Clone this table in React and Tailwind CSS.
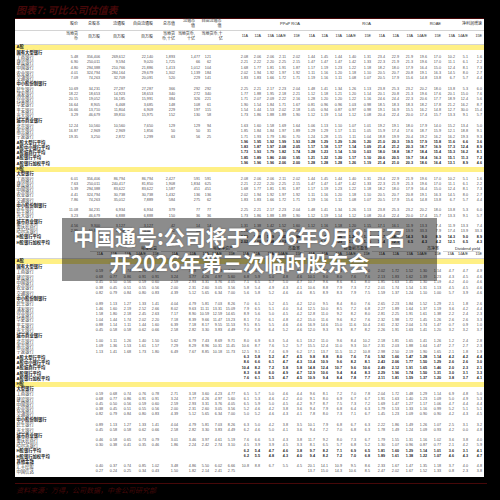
const S1 = 'grid grid-cols-[53px_10px_22px_25px_28px_22px_25px_11px_37px_13px_13px_12px_14px_15px_13px_14px_14px_15px_14px_14px_14px_14px_14px_14px_13px_14px]'
const S2 = 'grid grid-cols-[73px_15px_14px_14px_15px_13px_19px_18px_13px_13px_13px_14px_11px_14px_14px_14px_13px_13px_14px_14px_14px_15px_14px_14px_14px_14px_13px_14px_14px]'

const g = (label) => ({ kind: 'g', label, values: [] })
const r = (label, v) => ({ kind: 'r', label, values: v.split(' ').map((x) => (x === '_' ? '' : x)) })
const a = (label, v) => ({ kind: 'a', label, values: v.split(' ').map((x) => (x === '_' ? '' : x)) })

const RA = {
  icbc: '2.08 2.06 2.06 2.11 2.02 1.44 1.45 1.44 1.40 1.31 23.4 22.9 21.9 19.6 17.0 10.2 5.1 1.6',
  ccb: '2.21 2.22 2.20 2.25 2.15 1.47 1.47 1.47 1.42 1.33 22.3 21.9 21.3 19.6 17.0 11.1 6.1 2.2',
  boc: '1.68 1.77 1.81 1.91 1.87 1.17 1.19 1.23 1.22 1.18 18.2 18.0 17.9 16.4 15.0 12.4 8.1 7.3',
  abc: '2.02 1.94 1.92 1.97 1.92 1.11 1.16 1.20 1.18 1.10 20.5 20.7 20.8 19.1 16.3 14.5 8.0 2.7',
  bocom: '1.83 1.83 1.66 1.72 1.71 1.19 1.16 1.11 1.08 1.07 20.5 17.9 15.6 14.8 13.8 6.7 5.7 4.4',
  cmbc: '2.25 2.21 2.17 2.23 2.04 1.48 1.41 1.34 1.26 1.13 23.8 25.3 23.2 20.2 18.0 13.8 5.3 6.0',
  ceb: '1.73 1.86 1.88 1.89 1.90 1.12 1.19 1.14 1.12 1.08 20.4 22.4 20.0 17.4 15.7 13.3 9.1 5.7',
}

const s1A = [
  g('国有大型银行'),
  r('工商银行', '5.48 356,406 269,612 22,140 1,893 1,477 121 ' + RA.icbc),
  r('建设银行', '6.90 250,011 9,594 9,020 1,725 66 62 ' + RA.ccb),
  r('中国银行', '4.80 294,388 210,766 21,886 1,413 1,012 104 ' + RA.boc),
  r('农业银行', '4.01 324,794 284,164 29,679 1,302 1,139 184 ' + RA.abc),
  r('交通银行', '7.09 74,263 32,709 20,091 520 229 141 ' + RA.bocom),
  g('中小股份制银行'),
  r('民生银行', '10.69 34,231 27,287 27,287 366 292 292 ' + RA.cmbc),
  r('浦发银行', '18.22 18,653 14,923 18,653 340 272 340 1.77 1.88 1.95 2.18 2.21 1.12 1.18 1.21 1.20 1.14 20.1 20.8 21.3 19.6 17.6 20.1 15.0 7.6'),
  r('兴业银行', '20.15 19,052 16,185 15,991 384 326 221 1.71 2.07 2.09 2.22 2.16 1.28 1.20 1.20 1.22 1.16 24.6 24.4 22.3 20.6 17.7 18.9 12.4 5.6'),
  r('华夏银行', '16.64 8,905 6,468 3,685 148 108 61 1.90 1.54 1.84 1.71 1.67 0.81 0.96 0.96 1.03 0.98 18.5 18.3 18.3 18.2 17.8 21.2 16.2 8.7'),
  r('平安银行', '16.66 13,710 11,804 6,909 229 197 115 1.54 1.44 1.53 2.02 2.18 1.05 0.94 0.87 0.97 0.98 19.1 16.9 15.5 16.2 14.8 12.7 30.0 15.4'),
  r('光大银行', '3.29 46,679 39,810 15,975 152 130 58 ' + RA.ceb),
  g('城市商业银行'),
  r('北京银行', '12.24 10,560 10,560 7,650 129 129 94 1.63 1.60 1.58 1.69 1.64 1.06 1.13 1.10 1.07 1.01 19.2 19.1 18.0 17.9 14.0 15.2 13.4 5.0'),
  r('南京银行', '16.87 2,969 2,969 1,856 50 50 31 1.85 1.84 1.84 1.97 1.89 1.29 1.29 1.17 1.11 1.05 15.9 17.4 17.6 18.7 15.9 12.1 18.8 9.1'),
  r('宁波银行', '19.35 3,250 2,872 1,299 63 56 25 1.71 1.93 1.79 1.80 1.70 1.24 1.28 1.15 1.11 1.04 18.8 19.9 20.4 19.2 16.2 16.2 19.3 9.3'),
  a('A股大型行平均', '_ _ _ _ _ _ _ 1.96 1.95 1.92 1.99 1.93 1.28 1.29 1.29 1.26 1.20 21.0 20.3 19.5 17.9 15.8 11.6 6.6 3.6'),
  a('A股中小银行平均', '_ _ _ _ _ _ _ 1.83 1.87 1.97 2.08 2.05 1.17 1.18 1.17 1.14 1.09 21.4 21.2 20.3 18.7 16.9 17.3 12.4 8.9'),
  a('A股城商行平均', '_ _ _ _ _ _ _ 1.73 1.93 1.79 1.82 1.74 1.28 1.23 1.14 1.10 1.03 18.0 18.8 18.7 18.4 15.4 15.3 16.2 8.1'),
  a('A股银行平均', '_ _ _ _ _ _ _ 1.85 1.89 1.86 2.00 1.95 1.21 1.22 1.20 1.17 1.10 20.6 20.5 19.7 18.4 16.3 15.1 11.3 7.2'),
  a('A股银行加权平均', '_ _ _ _ _ _ _ 1.96 1.96 1.96 2.06 2.00 1.28 1.28 1.28 1.26 1.19 21.4 21.0 20.3 18.6 16.4 13.1 8.9 4.6'),
]

const s1H = [
  g('大型银行'),
  r('工商银行', '6.01 356,406 86,794 86,794 2,427 591 591 ' + RA.icbc),
  r('建设银行', '7.63 250,011 240,417 81,850 1,908 1,834 625 ' + RA.ccb),
  r('中国银行', '5.39 294,388 83,622 83,622 1,587 451 451 ' + RA.boc),
  r('农业银行', '4.41 324,794 30,738 30,738 1,432 136 136 ' + RA.abc),
  r('交通银行', '7.86 74,263 35,012 7,889 584 275 62 ' + RA.bocom),
  g('中小股份制银行'),
  r('民生银行', '11.08 34,231 6,934 6,934 379 77 77 ' + RA.cmbc),
  r('光大银行', '3.23 46,679 6,888 6,888 150 36 36 ' + RA.ceb),
  g('城市商业银行'),
  r('重庆农商行', '4.56 9,300 3,127 3,127 42 14 14 1.31 1.38 1.42 1.52 1.60 1.12 1.16 1.18 1.20 1.15 17.1 16.1 11.9 13.3 7.4 11.9 13.3 7.4'),
  r('哈尔滨银行', '2.95 10,995 3,300 3,300 32 10 10 1.26 1.30 1.35 1.41 1.45 1.05 1.09 1.10 1.12 1.08 15.2 17.4 13.9 33.3 7.9 17.4 13.9 33.3'),
  a('H股银行平均', '_ _ _ _ _ _ _ 2.00 1.98 1.99 2.05 1.98 1.25 1.27 1.26 1.24 1.18 17.7 18.4 14.3 9.0 8.9 14.3 9.0 8.9'),
  a('H股银行加权平均', '_ _ _ _ _ _ _ 2.02 2.00 1.98 2.03 1.98 1.27 1.28 1.29 1.27 1.20 16.4 12.1 6.5 4.3 4.2 12.1 6.5 4.3'),
]

const V = {
  icbc: '0.59 0.68 0.74 0.76 0.78 2.71 3.18 3.60 4.23 4.77',
  ccb: '0.68 0.77 0.86 0.91 0.91 3.24 3.77 4.26 4.97 5.60',
  boc: '0.45 0.50 0.56 0.59 0.60 2.59 2.93 3.31 3.76 4.05',
  abc: '0.38 0.45 0.51 0.55 0.56 2.00 2.31 2.60 3.05 3.56',
  bocom: '0.82 0.79 0.84 0.80 0.83 4.39 5.12 5.65 6.34 7.00',
  cmbc: '0.89 1.13 1.27 1.33 1.41 4.04 4.79 5.81 7.03 8.26',
  ceb: '0.45 0.58 0.58 0.62 0.66 2.58 2.82 3.30 3.83 4.49',
}
const B10 = '_ _ _ _ _ _ _ _ _ _'

const s2A = [
  g('国有大型银行'),
  r('工商银行', V.icbc + ' 6.4 5.7 5.0 4.7 4.6 9.6 8.1 7.4 7.6 7.0 2.02 1.72 1.52 1.30 1.14 4.7 4.7 4.9'),
  r('建设银行', V.ccb + ' 6.8 5.9 5.0 4.8 4.6 10.1 9.0 8.0 7.6 7.6 2.13 1.83 1.62 1.39 1.23 4.3 4.5 4.6'),
  r('中国银行', V.boc + ' 7.1 6.5 5.7 5.0 4.7 10.7 9.6 8.6 8.1 8.0 1.85 1.63 1.45 1.30 1.19 4.2 4.0 4.6'),
  r('农业银行', V.abc + ' 5.8 5.4 4.9 4.3 4.1 10.6 8.8 7.9 7.3 7.2 2.01 1.74 1.54 1.31 1.13 4.5 4.5 4.6'),
  r('交通银行', V.bocom + ' 5.6 5.8 5.2 4.6 4.6 8.5 8.9 8.3 7.9 7.5 1.59 1.37 1.24 1.10 1.00 5.7 3.9 4.6'),
  g('中小股份制银行'),
  r('民生银行', V.cmbc + ' 7.0 6.1 5.2 4.5 4.2 12.0 9.5 8.4 8.0 7.6 2.65 2.23 1.84 1.52 1.29 2.1 1.8 2.6'),
  r('浦发银行', '1.46 1.60 2.19 2.52 2.66 8.02 9.63 11.11 13.31 15.09 7.9 6.5 5.1 4.0 3.4 12.5 10.0 8.5 7.2 6.8 2.27 1.89 1.64 1.37 1.19 3.6 4.2 4.4'),
  r('兴业银行', '1.58 1.80 2.18 2.45 2.63 7.17 8.90 10.59 12.59 14.65 8.9 5.6 5.0 4.5 4.2 12.8 11.0 9.2 8.2 8.0 2.81 2.25 1.91 1.61 1.38 2.2 2.4 2.3'),
  r('华夏银行', '1.04 1.44 1.74 2.02 2.20 7.18 8.39 9.66 11.47 13.23 8.1 7.0 6.1 4.8 4.2 15.0 11.6 9.6 8.2 7.6 2.32 1.98 1.72 1.45 1.26 2.6 2.6 3.3'),
  r('平安银行', '0.88 1.14 1.11 1.44 1.60 6.39 7.18 8.17 9.55 11.53 9.5 8.5 5.5 4.6 4.6 16.9 14.6 15.0 11.6 10.4 2.61 2.32 2.04 1.74 1.47 0.7 0.9 1.0'),
  r('光大银行', V.ceb + ' 7.0 5.8 6.4 5.2 4.6 12.0 9.3 9.3 8.7 8.2 2.26 1.91 1.63 1.41 1.20 3.2 3.2 3.7'),
  g('城市商业银行'),
  r('北京银行', '1.00 1.11 1.26 1.40 1.50 5.62 6.79 7.43 8.69 9.71 8.0 6.9 6.3 5.4 6.1 13.2 11.0 9.6 8.4 10.2 2.18 1.81 1.65 1.41 1.26 1.2 2.4 2.8'),
  r('南京银行', '1.09 1.36 1.53 1.61 1.57 7.29 8.29 8.96 10.31 11.45 10.6 8.7 7.6 5.2 5.7 15.5 12.4 11.0 9.3 10.7 2.31 2.03 1.88 1.64 1.47 2.7 2.7 2.3'),
  r('宁波银行', '1.13 1.41 1.68 1.73 1.80 6.49 7.67 8.85 10.18 11.73 12.5 9.1 7.4 6.9 6.2 17.1 13.7 11.5 11.2 10.8 2.98 2.50 2.19 1.90 1.65 2.1 1.8 1.9'),
  a('A股大型行平均', B10 + ' 6.3 5.8 5.2 4.7 4.5 9.8 8.8 8.0 7.6 7.6 1.92 1.66 1.47 1.28 1.14 4.2 4.2 4.4'),
  a('A股中小银行平均', B10 + ' 8.6 6.6 6.1 4.7 4.3 13.4 10.9 9.6 8.2 8.1 2.43 2.06 1.77 1.50 1.29 2.6 2.6 3.0'),
  a('A股城商行平均', B10 + ' 10.4 8.2 7.2 5.8 5.8 14.8 12.4 10.7 9.6 10.6 2.49 2.12 1.91 1.65 1.46 2.0 2.3 2.1'),
  a('A股银行平均', B10 + ' 8.3 6.8 6.0 4.9 4.7 12.9 10.6 9.4 8.4 8.3 2.29 1.96 1.74 1.50 1.31 3.0 3.1 3.3'),
  a('A股银行加权平均', B10 + ' 7.6 6.1 5.5 4.7 4.5 10.9 9.4 8.4 7.8 7.7 2.11 1.81 1.59 1.37 1.20 3.8 3.7 4.1'),
]

const s2H = [
  g('大型银行'),
  r('工商银行', V.icbc + ' 6.5 5.7 5.0 4.6 4.4 9.6 8.1 7.2 7.0 7.8 2.04 1.72 1.48 1.29 1.14 6.9 4.8 5.0'),
  r('建设银行', V.ccb + ' 6.1 5.3 4.6 4.2 4.0 9.1 8.0 6.9 6.7 6.7 1.91 1.63 1.40 1.23 1.09 5.0 4.9 5.3'),
  r('中国银行', V.boc + ' 6.5 5.9 5.0 4.5 4.2 9.7 8.7 7.5 7.3 7.2 1.69 1.47 1.27 1.17 1.06 4.7 4.4 4.4'),
  r('农业银行', V.abc + ' 5.2 4.6 4.2 3.8 3.6 9.4 7.9 6.8 6.4 6.3 1.79 1.53 1.33 1.16 0.99 5.2 5.1 5.1'),
  r('交通银行', V.bocom + ' 5.0 5.2 4.6 4.3 4.1 7.8 8.0 7.3 7.1 6.7 1.45 1.23 1.09 0.90 0.90 4.2 4.3 4.5'),
  g('中小股份制银行'),
  r('民生银行', V.cmbc + ' 6.3 5.0 4.2 3.8 3.5 10.1 7.9 6.8 6.7 6.3 2.22 1.86 1.49 1.26 1.07 2.5 3.1 3.2'),
  r('光大银行', V.ceb + ' 6.2 4.6 5.0 4.1 3.6 9.4 7.2 7.0 6.8 6.3 1.78 1.49 1.24 1.09 0.93 4.2 0.0 4.8'),
  g('城市商业银行'),
  r('重庆农商行', '0.46 0.58 0.65 0.73 0.79 3.01 3.46 3.97 4.61 5.19 7.6 6.6 5.3 4.3 3.8 11.7 9.2 8.0 7.3 6.7 1.79 1.55 1.31 1.16 1.02 3.6 3.8 4.0'),
  r('哈尔滨银行', '0.30 0.38 0.41 0.35 0.46 1.86 2.24 2.42 2.74 3.10 4.5 3.9 3.9 4.5 3.3 8.1 6.5 5.7 6.8 5.2 1.30 1.07 0.96 0.87 0.77 2.1 4.2 5.9'),
  a('H股银行平均', B10 + ' 6.2 5.4 4.7 4.6 3.8 9.7 8.2 7.1 6.9 6.5 1.81 1.60 1.29 1.14 1.01 3.6 3.1 4.1'),
  a('H股银行加权平均', B10 + ' 6.2 5.5 4.8 4.3 4.0 9.4 8.2 7.2 7.0 6.8 1.89 1.61 1.38 1.22 1.07 4.6 4.3 4.7'),
  g('其他金融'),
  r('汇丰控股', '0.40 0.37 0.74 0.85 1.02 3.48 4.86 5.50 6.02 6.66 10.8 8.8 6.7 5.5 4.5 20.1 14.1 10.9 9.5 8.6 2.33 1.67 1.47 1.35 1.18 3.7 4.0 4.8'),
  r('中国信达', '0.27 0.24 0.25 0.34 0.43 1.50 1.82 2.14 2.41 2.75 _ _ _ _ _ 13.7 15.0 14.3 10.6 8.5 2.47 2.02 1.67 1.52 1.33 0.8 2.3 3.8'),
]

function Row({ cols, h, row }) {
  const bold = row.kind !== 'r'
  return (
    <div className={`${cols} ${h} items-center`}>
      <div className={`pl-[1.5px] whitespace-nowrap text-[4.3px] leading-none ${bold ? 'font-bold text-[rgb(26,26,26)]' : 'text-[rgb(60,60,60)]'}`}>
        {row.label}
      </div>
      {row.values.map((v, i) => (
        <div
          key={i}
          className={`flex justify-end whitespace-nowrap text-[3.7px] leading-none ${row.kind === 'a' ? 'font-bold text-[rgb(26,26,26)]' : 'text-[rgb(80,80,80)]'}`}
        >
          {v}
        </div>
      ))}
    </div>
  )
}

function Band({ label, h }) {
  return (
    <div className={`${h} bg-yellow-200 bg-[rgb(255,255,153)] flex items-center pl-[1.5px] text-[4.3px] font-bold leading-none text-[rgb(26,26,26)]`}>
      {label}
    </div>
  )
}

const Hd = ({ children, className = '' }) => (
  <div className={`flex justify-end whitespace-nowrap text-right text-[4px] leading-[4.8px] text-[rgb(40,40,40)] ${className}`}>
    {children}
  </div>
)

const Yr = ({ children }) => (
  <div className="flex justify-end whitespace-nowrap text-[3.7px] leading-none text-[rgb(40,40,40)]">{children}</div>
)

const YEARS5 = ['11A', '12A', '13A', '14A/E', '15E']
const YEARS3 = ['13A', '14A/E', '15E']

export default function App() {
  return (
    <div className="relative w-[500px] h-[500px] overflow-hidden bg-black text-neutral-900 [font-family:Liberation_Sans,Noto_Sans_CJK_SC,sans-serif]">
      {/* title */}
      <div className="h-[18px] pl-[16px] pt-[4px] text-[10px] leading-[11px] font-bold italic text-red-950 [font-family:Noto_Sans_CJK_SC,serif]">
        图表7: 可比公司估值表
      </div>
      <div className="ml-[15px] w-[469px] h-px bg-red-950" />

      <div className="ml-[15px] w-[469px] h-[458px] bg-white">
        {/* section 1 header */}
        <div className={`${S1} h-[11.5px] items-center border-b border-neutral-300`}>
          <div />
          <Hd>股价</Hd>
          <Hd>总股本</Hd>
          <Hd>流通股</Hd>
          <Hd>自由流通股</Hd>
          <Hd>总市值</Hd>
          <Hd className="text-[3.8px] text-center pr-[5px]">流通市<br />值</Hd>
          <Hd className="text-[3.8px] text-left justify-start pl-[1.5px]">自由流通市<br />值</Hd>
          <Hd className="col-span-5 justify-center pl-[30px]">PPoP ROA</Hd>
          <Hd className="col-span-5 justify-center">ROA</Hd>
          <Hd className="col-span-5 justify-center">ROAE</Hd>
          <Hd className="col-span-3 justify-center pl-[10px]">净利润增速</Hd>
        </div>
        <div className={`${S1} h-[14px] items-center border-b border-neutral-300`}>
          <div />
          <Hd>当地货<br />币</Hd>
          <Hd>百万股</Hd>
          <Hd>百万股</Hd>
          <Hd>百万股</Hd>
          <Hd className="text-[3.8px]">当地货<br />币,十亿</Hd>
          <Hd className="text-[3.8px] text-center pr-[5px]">当地货币,<br />十亿</Hd>
          <Hd className="text-[3.8px] text-left justify-start pl-[1.5px]">当地货币,十<br />亿</Hd>
          {[...YEARS5, ...YEARS5, ...YEARS5, ...YEARS3].map((y, i) => (
            <Yr key={i}>{y}</Yr>
          ))}
        </div>
        <Band label="A股" h="h-[5.5px]" />
        {s1A.map((row, i) => (
          <Row key={i} cols={S1} h="h-[5.3px]" row={row} />
        ))}
        <Band label="H股" h="h-[5.3px]" />
        {s1H.map((row, i) => (
          <Row key={i} cols={S1} h="h-[5.25px]" row={row} />
        ))}

        {/* section 2 header */}
        <div className={`${S2} h-[7px] items-end`}>
          <div />
          <Hd className="col-span-5 justify-center mx-[2px] border-b border-neutral-300">每股收益</Hd>
          <Hd className="col-span-5 justify-center mx-[2px] border-b border-neutral-300">每股净资产</Hd>
          <Hd className="col-span-5 justify-center mx-[2px] border-b border-neutral-300">市盈率</Hd>
          <Hd className="col-span-5 justify-center mx-[2px] border-b border-neutral-300">拨备前市盈率</Hd>
          <Hd className="col-span-5 justify-center mx-[2px] border-b border-neutral-300">市净率</Hd>
          <Hd className="col-span-3 justify-center mx-[2px] border-b border-neutral-300">Dividend yield</Hd>
        </div>
        <div className={`${S2} h-[6.5px] items-center border-b border-neutral-300`}>
          <div />
          {[...YEARS5, ...YEARS5, ...YEARS5, ...YEARS5, ...YEARS5, ...YEARS3].map((y, i) => (
            <Yr key={i}>{y}</Yr>
          ))}
        </div>
        <Band label="A股" h="h-[5.5px]" />
        {s2A.map((row, i) => (
          <Row key={i} cols={S2} h="h-[5.35px]" row={row} />
        ))}
        <Band label="H股" h="h-[4.8px]" />
        {s2H.map((row, i) => (
          <Row key={i} cols={S2} h="h-[5.2px]" row={row} />
        ))}
      </div>

      <div className="ml-[15px] mt-[6px] w-[472px] h-px bg-red-950" />
      <div className="pl-[16px] pt-[2px] text-[7px] leading-[8px] italic text-red-950 [font-family:Noto_Sans_CJK_SC,sans-serif]">
        资料来源：万得，公司数据，中金公司研究部
      </div>

      {/* headline overlay */}
      <div className="absolute left-[62px] top-[218px] w-[375px] h-[63px] bg-black/45 pt-[5px] pl-[10px] pr-[30px] text-white font-bold text-[21px] leading-[26px] text-center [font-family:Noto_Sans_CJK_SC,sans-serif] [text-shadow:0_0_2px_rgba(0,0,0,0.35)]">
        <div className="whitespace-nowrap">中国通号:公司将于2026年9月8日召</div>
        <div className="whitespace-nowrap">开2026年第三次临时股东会</div>
      </div>
    </div>
  )
}
